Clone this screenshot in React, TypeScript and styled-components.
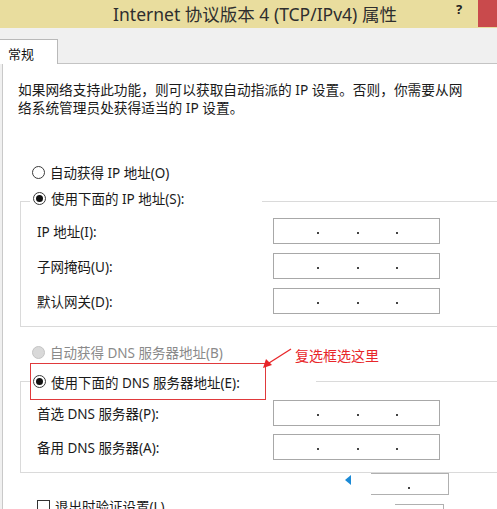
import React from "react";
import styled, { createGlobalStyle } from "styled-components";

const GlobalStyle = createGlobalStyle`
  html, body {
    margin: 0;
    padding: 0;
    background: #f0f0f0;
    overflow: hidden;
  }
  body {
    font-family: "Noto Sans", "Noto Sans CJK SC", sans-serif;
    font-size: 13px;
    color: #1a1a1a;
  }
`;

type IpRow = { label: string };

const ipRows: IpRow[] = [
  { label: "IP 地址(I):" },
  { label: "子网掩码(U):" },
  { label: "默认网关(D):" },
];

const dnsRows: IpRow[] = [
  { label: "首选 DNS 服务器(P):" },
  { label: "备用 DNS 服务器(A):" },
];

const Radio: React.FC<{ checked?: boolean; disabled?: boolean }> = ({ checked, disabled }) => (
  <RadioCircle $disabled={disabled}>{checked && <RadioDot />}</RadioCircle>
);

const IpBox: React.FC<{ dots?: number }> = ({ dots = 3 }) => (
  <IpField>
    {Array.from({ length: dots }).map((_, i) => (
      <IpDot key={i} />
    ))}
  </IpField>
);

const App: React.FC = () => {
  return (
    <Window>
      <GlobalStyle />
      <TitleBar>
        <Title>Internet 协议版本 4 (TCP/IPv4) 属性</Title>
        <Help>?</Help>
        <CloseButton aria-label="close" />
      </TitleBar>

      <TabStrip>
        <Tab>常规</Tab>
        <TabFill />
      </TabStrip>

      <Panel>
        <Description>
          如果网络支持此功能，则可以获取自动指派的 IP 设置。否则，你需要从网
          <br />
          络系统管理员处获得适当的 IP 设置。
        </Description>

        <RadioLine $top={46}>
          <Radio />
          <span>自动获得 IP 地址(O)</span>
        </RadioLine>

        <Group $top={8}>
          <GroupLegend $width={232}>
            <LegendInner>
              <Radio checked />
              <span>使用下面的 IP 地址(S):</span>
            </LegendInner>
          </GroupLegend>
          <Rows $gap={9} $padTop={5}>
            {ipRows.map((r) => (
              <FieldRow key={r.label}>
                <FieldLabel>{r.label}</FieldLabel>
                <IpBox />
              </FieldRow>
            ))}
          </Rows>
        </Group>

        <RadioLine $top={16} $disabled>
          <Radio disabled />
          <span>自动获得 DNS 服务器地址(B)</span>
        </RadioLine>

        <DnsArea>
          <Group $top={2}>
            <GroupLegend $width={286}>
              <Highlight>
                <Radio checked />
                <span>使用下面的 DNS 服务器地址(E):</span>
              </Highlight>
            </GroupLegend>
            <Rows $gap={8} $padTop={0}>
              {dnsRows.map((r) => (
                <FieldRow key={r.label}>
                  <FieldLabel>{r.label}</FieldLabel>
                  <IpBox />
                </FieldRow>
              ))}
            </Rows>
          </Group>

          <Callout>
            <svg width="34" height="22" viewBox="0 0 34 22">
              <line x1="30" y1="1" x2="8" y2="15" stroke="#e8262a" strokeWidth="1.3" />
              <polygon points="2,20 5,11 11,17" fill="#e8262a" />
            </svg>
            <CalloutText>复选框选这里</CalloutText>
          </Callout>
        </DnsArea>

        <PartialRow>
          <Pointer />
          <SmallBox>
            <IpDot />
          </SmallBox>
        </PartialRow>

        <CheckRow>
          <CheckBox />
          <span>退出时验证设置(L)</span>
          <LastBox />
        </CheckRow>
      </Panel>
    </Window>
  );
};

export default App;

const Window = styled.div`
  width: 100%;
  height: 100vh;
  overflow: hidden;
  display: flex;
  flex-direction: column;
`;

const TitleBar = styled.div`
  height: 28px;
  flex: 0 0 28px;
  background: #e9dd9e;
  display: grid;
  grid-template-columns: minmax(0, 1fr) 20px 19px;
  column-gap: 9px;
  align-items: start;
`;

const Title = styled.div`
  padding: 2px 0 0 70px;
  text-align: center;
  font-size: 17.5px;
  line-height: 24px;
  color: #2e2e2e;
  white-space: nowrap;
`;

const Help = styled.div`
  font-size: 13px;
  line-height: 16px;
  font-weight: bold;
  color: #222;
  text-align: center;
  padding-top: 1px;
`;

const CloseButton = styled.div`
  position: relative;
  z-index: 2;
  height: 27px;
  background-color: rgb(201, 74, 76);
`;

const TabStrip = styled.div`
  height: 36px;
  flex: 0 0 36px;
  display: flex;
  align-items: flex-end;
`;

const Tab = styled.div`
  width: 58px;
  height: 25px;
  box-sizing: border-box;
  background: #fff;
  border: 1px solid #b9b9b9;
  border-bottom: none;
  border-left: none;
  padding: 4px 0 0 8px;
  font-size: 13px;
  color: #111;
`;

const TabFill = styled.div`
  flex: 1;
  border-bottom: 1px solid #c4c4c4;
`;

const Panel = styled.div`
  flex: 1;
  background: #fff;
  margin-left: 2px;
  border-left: 1px solid #c9c9c9;
  padding-top: 17px;
  display: flex;
  flex-direction: column;
`;

const Description = styled.div`
  margin-left: 15px;
  font-size: 13.7px;
  line-height: 18px;
  color: #1a1a1a;
  white-space: nowrap;
`;

const RadioLine = styled.div<{ $top: number; $disabled?: boolean }>`
  margin-top: ${(p) => p.$top}px;
  margin-left: 29px;
  height: 18px;
  display: flex;
  align-items: center;
  gap: 5px;
  font-size: 13.5px;
  color: ${(p) => (p.$disabled ? "#8a8a8a" : "#1a1a1a")};
  white-space: nowrap;
`;

const RadioCircle = styled.span<{ $disabled?: boolean }>`
  width: 13px;
  height: 13px;
  box-sizing: border-box;
  border-radius: 50%;
  border: 1px solid ${(p) => (p.$disabled ? "#c4c4c4" : "#3a3a3a")};
  background: ${(p) => (p.$disabled ? "#d9d9d9" : "#fff")};
  display: inline-flex;
  align-items: center;
  justify-content: center;
  flex: 0 0 13px;
`;

const RadioDot = styled.span`
  width: 7px;
  height: 7px;
  border-radius: 50%;
  background: #111;
`;

const Group = styled.fieldset<{ $top: number }>`
  margin: ${(p) => p.$top}px 0 0 17px;
  padding: 0 0 12px 0;
  border: 1px solid #dadada;
  border-right: none;
  min-width: 0;
`;

const GroupLegend = styled.legend<{ $width: number }>`
  width: ${(p) => p.$width}px;
  margin-left: 9px;
  padding: 0;
  box-sizing: border-box;
`;

const LegendInner = styled.div`
  height: 24px;
  padding: 0 0 6px 3px;
  box-sizing: border-box;
  display: flex;
  align-items: center;
  gap: 5px;
  font-size: 13.5px;
  white-space: nowrap;
`;

const Highlight = styled.div`
  width: 236px;
  height: 37px;
  box-sizing: border-box;
  border: 1.5px solid #e0393b;
  padding-left: 2px;
  display: flex;
  align-items: center;
  gap: 5px;
  font-size: 13.5px;
  white-space: nowrap;
`;

const Rows = styled.div<{ $gap: number; $padTop: number }>`
  padding-top: ${(p) => p.$padTop}px;
  display: flex;
  flex-direction: column;
  gap: ${(p) => p.$gap}px;
`;

const FieldRow = styled.div`
  display: flex;
  align-items: center;
  padding-left: 16px;
  height: 26px;
`;

const FieldLabel = styled.div`
  flex: 0 0 236px;
  font-size: 13.5px;
  white-space: nowrap;
`;

const IpField = styled.div`
  width: 167px;
  height: 26px;
  box-sizing: border-box;
  border: 1px solid #a8a8a8;
  background: #fff;
  display: flex;
  justify-content: space-between;
  align-items: center;
  padding: 4px 41px 0 43px;
`;

const IpDot = styled.span`
  width: 2px;
  height: 2px;
  background: #444;
`;

const DnsArea = styled.div`
  position: relative;
`;

const Callout = styled.div`
  position: absolute;
  left: 258px;
  top: -13px;
  display: flex;
  align-items: flex-start;
`;

const CalloutText = styled.span`
  margin-top: -3px;
  font-size: 14px;
  color: #e8262a;
  white-space: nowrap;
`;

const PartialRow = styled.div`
  display: flex;
  align-items: flex-start;
  padding-left: 342px;
  height: 23px;
`;

const Pointer = styled.span`
  width: 0;
  height: 0;
  margin-top: 2px;
  border-top: 5px solid transparent;
  border-bottom: 5px solid transparent;
  border-right: 6px solid #1b8ad6;
`;

const SmallBox = styled.div`
  margin-left: 20px;
  width: 78px;
  height: 22px;
  box-sizing: border-box;
  border: 1px solid #b0b0b0;
  border-left: none;
  display: flex;
  align-items: flex-end;
  padding: 0 0 5px 37px;
`;

const CheckRow = styled.div`
  display: flex;
  align-items: center;
  padding-left: 34px;
  gap: 5px;
  font-size: 13.5px;
  white-space: nowrap;
  position: relative;
`;

const CheckBox = styled.span`
  width: 13px;
  height: 13px;
  box-sizing: border-box;
  border: 1px solid #333;
  background: #fff;
  flex: 0 0 13px;
`;

const LastBox = styled.div`
  position: absolute;
  left: 392px;
  top: 8px;
  width: 48px;
  height: 20px;
  border: 1px solid #b0b0b0;
  border-left: none;
`;
